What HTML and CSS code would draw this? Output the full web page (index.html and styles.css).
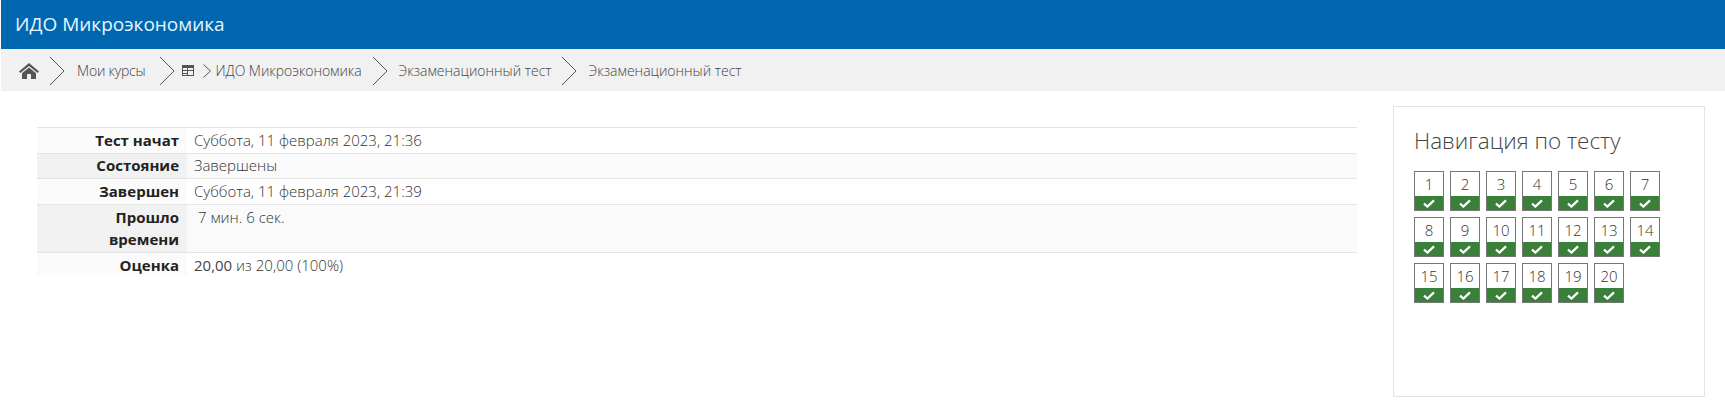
FILE: index.html
```html
<!DOCTYPE html>
<html lang="ru">
<head>
<meta charset="utf-8">
<title>ИДО Микроэкономика</title>
<link rel="stylesheet" href="styles.css">
</head>
<body>
<header class="topbar"><h1 class="course-title">ИДО Микроэкономика</h1></header>
<nav class="crumbs">
  <svg class="home" viewBox="0 0 20 16" width="20" height="16"><path d="M10 0 L20 8.6 L18.6 10 L10 2.9 L1.4 10 L0 8.6 Z M10 4.4 L17 10.2 V16 H12 V11 H8 V16 H3 V10.2 Z" fill="#555"/></svg>
  <svg class="sep sep-first" viewBox="0 0 16 30" width="16" height="30"><path d="M1 1 L15 15 L1 29" fill="none" stroke="#555" stroke-width="1"/></svg>
  <span class="crumb crumb-courses">Мои курсы</span>
  <svg class="sep sep-courses" viewBox="0 0 16 30" width="16" height="30"><path d="M1 1 L15 15 L1 29" fill="none" stroke="#555" stroke-width="1"/></svg>
  <svg class="table-icon" viewBox="0 0 12 11" width="12" height="11"><path d="M0 0 H12 V11 H0 Z M1 3 V5 H5 V3 Z M6 3 V5 H11 V3 Z M1 6 V8 H5 V6 Z M6 6 V10 H11 V6 Z M1 9 V10 H5 V9 Z" fill="#555" fill-rule="evenodd"/></svg>
  <svg class="sep-small" viewBox="0 0 8 14" width="8" height="14"><path d="M0.5 0.5 L7.5 7 L0.5 13.5" fill="none" stroke="#555" stroke-width="1"/></svg>
  <span class="crumb crumb-course">ИДО Микроэкономика</span>
  <svg class="sep sep-course" viewBox="0 0 16 30" width="16" height="30"><path d="M1 1 L15 15 L1 29" fill="none" stroke="#555" stroke-width="1"/></svg>
  <span class="crumb crumb-test">Экзаменационный тест</span>
  <svg class="sep sep-test" viewBox="0 0 16 30" width="16" height="30"><path d="M1 1 L15 15 L1 29" fill="none" stroke="#555" stroke-width="1"/></svg>
  <span class="crumb crumb-last">Экзаменационный тест</span>
</nav>
<main class="page">
  <section class="summary">
    <table class="review">
      <tr><th>Тест начат</th><td>Суббота, 11 февраля 2023, 21:36</td></tr>
      <tr><th>Состояние</th><td>Завершены</td></tr>
      <tr><th>Завершен</th><td>Суббота, 11 февраля 2023, 21:39</td></tr>
      <tr><th>Прошло времени</th><td class="elapsed">7 мин. 6 сек.</td></tr>
      <tr><th>Оценка</th><td><span class="strong">20,00</span> из 20,00 (100%)</td></tr>
    </table>
  </section>
  <aside class="quiz-nav">
    <h2 class="nav-title">Навигация по тесту</h2>
    <div class="nav-grid" id="grid">
      <a class="q"><span class="num">1</span><span class="ok"><svg viewBox="0 0 12 9" width="12" height="9"><path d="M1 4.6 L4.4 7.6 L11 1.4" fill="none" stroke="#fff" stroke-width="2.2"/></svg></span></a>
      <a class="q"><span class="num">2</span><span class="ok"><svg viewBox="0 0 12 9" width="12" height="9"><path d="M1 4.6 L4.4 7.6 L11 1.4" fill="none" stroke="#fff" stroke-width="2.2"/></svg></span></a>
      <a class="q"><span class="num">3</span><span class="ok"><svg viewBox="0 0 12 9" width="12" height="9"><path d="M1 4.6 L4.4 7.6 L11 1.4" fill="none" stroke="#fff" stroke-width="2.2"/></svg></span></a>
      <a class="q"><span class="num">4</span><span class="ok"><svg viewBox="0 0 12 9" width="12" height="9"><path d="M1 4.6 L4.4 7.6 L11 1.4" fill="none" stroke="#fff" stroke-width="2.2"/></svg></span></a>
      <a class="q"><span class="num">5</span><span class="ok"><svg viewBox="0 0 12 9" width="12" height="9"><path d="M1 4.6 L4.4 7.6 L11 1.4" fill="none" stroke="#fff" stroke-width="2.2"/></svg></span></a>
      <a class="q"><span class="num">6</span><span class="ok"><svg viewBox="0 0 12 9" width="12" height="9"><path d="M1 4.6 L4.4 7.6 L11 1.4" fill="none" stroke="#fff" stroke-width="2.2"/></svg></span></a>
      <a class="q"><span class="num">7</span><span class="ok"><svg viewBox="0 0 12 9" width="12" height="9"><path d="M1 4.6 L4.4 7.6 L11 1.4" fill="none" stroke="#fff" stroke-width="2.2"/></svg></span></a>
      <a class="q"><span class="num">8</span><span class="ok"><svg viewBox="0 0 12 9" width="12" height="9"><path d="M1 4.6 L4.4 7.6 L11 1.4" fill="none" stroke="#fff" stroke-width="2.2"/></svg></span></a>
      <a class="q"><span class="num">9</span><span class="ok"><svg viewBox="0 0 12 9" width="12" height="9"><path d="M1 4.6 L4.4 7.6 L11 1.4" fill="none" stroke="#fff" stroke-width="2.2"/></svg></span></a>
      <a class="q"><span class="num">10</span><span class="ok"><svg viewBox="0 0 12 9" width="12" height="9"><path d="M1 4.6 L4.4 7.6 L11 1.4" fill="none" stroke="#fff" stroke-width="2.2"/></svg></span></a>
      <a class="q"><span class="num">11</span><span class="ok"><svg viewBox="0 0 12 9" width="12" height="9"><path d="M1 4.6 L4.4 7.6 L11 1.4" fill="none" stroke="#fff" stroke-width="2.2"/></svg></span></a>
      <a class="q"><span class="num">12</span><span class="ok"><svg viewBox="0 0 12 9" width="12" height="9"><path d="M1 4.6 L4.4 7.6 L11 1.4" fill="none" stroke="#fff" stroke-width="2.2"/></svg></span></a>
      <a class="q"><span class="num">13</span><span class="ok"><svg viewBox="0 0 12 9" width="12" height="9"><path d="M1 4.6 L4.4 7.6 L11 1.4" fill="none" stroke="#fff" stroke-width="2.2"/></svg></span></a>
      <a class="q"><span class="num">14</span><span class="ok"><svg viewBox="0 0 12 9" width="12" height="9"><path d="M1 4.6 L4.4 7.6 L11 1.4" fill="none" stroke="#fff" stroke-width="2.2"/></svg></span></a>
      <a class="q"><span class="num">15</span><span class="ok"><svg viewBox="0 0 12 9" width="12" height="9"><path d="M1 4.6 L4.4 7.6 L11 1.4" fill="none" stroke="#fff" stroke-width="2.2"/></svg></span></a>
      <a class="q"><span class="num">16</span><span class="ok"><svg viewBox="0 0 12 9" width="12" height="9"><path d="M1 4.6 L4.4 7.6 L11 1.4" fill="none" stroke="#fff" stroke-width="2.2"/></svg></span></a>
      <a class="q"><span class="num">17</span><span class="ok"><svg viewBox="0 0 12 9" width="12" height="9"><path d="M1 4.6 L4.4 7.6 L11 1.4" fill="none" stroke="#fff" stroke-width="2.2"/></svg></span></a>
      <a class="q"><span class="num">18</span><span class="ok"><svg viewBox="0 0 12 9" width="12" height="9"><path d="M1 4.6 L4.4 7.6 L11 1.4" fill="none" stroke="#fff" stroke-width="2.2"/></svg></span></a>
      <a class="q"><span class="num">19</span><span class="ok"><svg viewBox="0 0 12 9" width="12" height="9"><path d="M1 4.6 L4.4 7.6 L11 1.4" fill="none" stroke="#fff" stroke-width="2.2"/></svg></span></a>
      <a class="q"><span class="num">20</span><span class="ok"><svg viewBox="0 0 12 9" width="12" height="9"><path d="M1 4.6 L4.4 7.6 L11 1.4" fill="none" stroke="#fff" stroke-width="2.2"/></svg></span></a>
    </div>
  </aside>
</main>
</body>
</html>
```
FILE: styles.css
```css
* { box-sizing: border-box; }
html, body { margin: 0; padding: 0; background: #fff; }
body { font-family: "Open Sans", "Liberation Sans", sans-serif; font-size: 14px; color: #555; height: 405px; overflow: hidden; }

.topbar { height: 49px; margin-left: 1px; background: #0066b0; display: flex; align-items: center; padding-left: 14px; }
.course-title { margin: 0; font-size: 19px; font-weight: 400; line-height: 1; color: #e6f6ff; }

.crumbs { height: 42px; margin-left: 1px; background: #f1f1f1; display: flex; align-items: center; padding-left: 18px; font-size: 14px; font-weight: 300; color: #444; border-top: 1px solid #e4f4fc; }
.crumb { line-height: 1; white-space: nowrap; }
.sep, .sep-small, .home, .table-icon { flex: none; display: block; }
.sep-first { margin-left: 10px; }
.crumb-courses { margin-left: 12px; letter-spacing: -0.2px; }
.sep-courses { margin-left: 13px; }
.table-icon { margin-left: 7px; }
.sep-small { margin-left: 9px; }
.crumb-course { margin-left: 5px; letter-spacing: -0.05px; }
.sep-course { margin-left: 10px; }
.crumb-test { margin-left: 11px; }
.sep-test { margin-left: 9px; }
.crumb-last { margin-left: 12px; }

.page { display: flex; align-items: flex-start; padding: 15px 21px 0 37px; }
.summary { width: 1320px; flex: none; padding-top: 21px; }
.review { width: 100%; border-collapse: collapse; table-layout: fixed; font-size: 15px; line-height: 22px; }
.review th { width: 150px; padding: 1px 8px 2px 30px; background: #fbfbfb; text-align: right; vertical-align: top; font-weight: 700; color: #222; border-top: 1px solid #e4e4e4; }
.review td { padding: 1px 10px 2px 7px; background: #fff; vertical-align: top; font-weight: 300; color: #333; border-top: 1px solid #e4e4e4; }
.review tr:nth-child(even) th { background: #f1f1f1; }
.review tr:nth-child(even) td { background: #fafafa; }
.review tr:nth-child(2) th, .review tr:nth-child(2) td { line-height: 21px; }
.review tr:nth-child(4) th, .review tr:nth-child(4) td { line-height: 22px; }
.review tr:last-child th, .review tr:last-child td { padding-bottom: 0; }
.review .elapsed { padding-left: 11px; }
.strong { font-weight: 400; color: #444; }

.quiz-nav { width: 312px; height: 291px; margin-left: 36px; flex: none; border: 1px solid #e4e4e4; padding: 22px 20px 0; }
.nav-title { margin: 0 0 18px; font-size: 22.5px; font-weight: 300; line-height: 24px; color: #444; }
.nav-grid { display: grid; grid-template-columns: repeat(7, 30px); column-gap: 6px; row-gap: 6px; }
.q { height: 40px; display: flex; flex-direction: column; border: 1px solid #777; background: #fff; }
.num { height: 24px; flex: none; display: flex; align-items: center; justify-content: center; font-size: 15px; font-weight: 300; color: #333; }
.ok { flex: 1; background: #3b803a; display: flex; align-items: center; justify-content: center; }
```
